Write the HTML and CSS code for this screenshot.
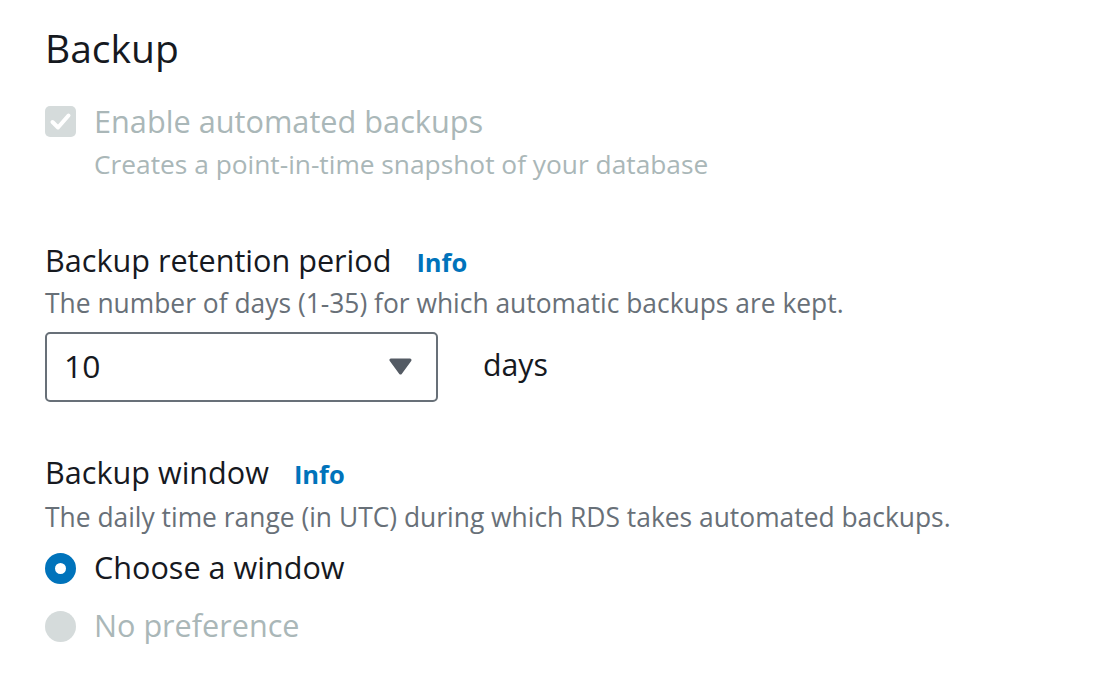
FILE: index.html
```html
<!DOCTYPE html>
<html lang="en">
<head>
<meta charset="utf-8">
<title>Backup</title>
<link rel="stylesheet" href="styles.css">
</head>
<body>
<section class="panel">
  <h2 class="panel-title">Backup</h2>

  <div class="check-row">
    <span class="checkbox" aria-hidden="true">
      <svg viewBox="0 0 31 31" width="31" height="31"><polyline points="7.5,16 13,21.5 23.5,9.5" fill="none" stroke="#fff" stroke-width="4" stroke-linecap="round" stroke-linejoin="round"/></svg>
    </span>
    <div class="check-text">
      <div class="check-label">Enable automated backups</div>
      <div class="check-desc">Creates a point-in-time snapshot of your database</div>
    </div>
  </div>

  <div class="field field-retention">
    <div class="field-label">Backup retention period <a class="info" href="#">Info</a></div>
    <div class="field-desc">The number of days (1-35) for which automatic backups are kept.</div>
    <div class="select-row">
      <div class="select">
        <span class="select-value">10</span>
        <svg class="select-arrow" viewBox="0 0 23 17" width="23" height="17"><polygon points="2,2 21,2 11.5,15" fill="#545b64" stroke="#545b64" stroke-width="3" stroke-linejoin="round"/></svg>
      </div>
      <span class="unit">days</span>
    </div>
  </div>

  <div class="field field-window">
    <div class="field-label">Backup window <a class="info" href="#">Info</a></div>
    <div class="field-desc field-desc-window">The daily time range (in UTC) during which RDS takes automated backups.</div>
    <div class="radio-row radio-first">
      <span class="radio radio-checked"></span>
      <span class="radio-label">Choose a window</span>
    </div>
    <div class="radio-row radio-second">
      <span class="radio radio-disabled"></span>
      <span class="radio-label radio-label-disabled">No preference</span>
    </div>
  </div>
</section>
</body>
</html>
```
FILE: styles.css
```css
html, body {
  margin: 0;
  padding: 0;
  background: #ffffff;
}

body {
  font-family: "Open Sans", "Noto Sans", sans-serif;
  color: #16191f;
}

.panel {
  padding: 25px 0 0 45px;
  width: 1000px;
}

.panel-title {
  margin: 0;
  font-size: 39px;
  line-height: 46px;
  font-weight: 400;
  color: #16191f;
}

/* checkbox */
.check-row {
  display: flex;
  align-items: flex-start;
  margin-top: 30px;
}

.checkbox {
  flex: none;
  width: 31px;
  height: 31px;
  margin-top: 5px;
  border-radius: 5px;
  background: #d5dbdb;
  display: flex;
}

.check-text {
  margin-left: 18px;
}

.check-label {
  font-size: 30.7px;
  line-height: 40px;
  color: #aab7b8;
}

.check-desc {
  font-size: 26.3px;
  line-height: 36px;
  margin-top: 5px;
  color: #aab7b8;
}

/* fields */
.field-retention {
  margin-top: 58px;
}

.field-window {
  margin-top: 50px;
}

.field-label {
  font-size: 30.6px;
  line-height: 40px;
  color: #16191f;
}

.info {
  font-size: 25.5px;
  font-weight: 700;
  color: #0073bb;
  text-decoration: none;
  margin-left: 17px;
}

.field-desc {
  font-size: 26.4px;
  line-height: 36px;
  color: #687078;
  margin-top: 3px;
}

.field-desc-window {
  margin-top: 5px;
}

/* select */
.select-row {
  display: flex;
  align-items: flex-start;
  margin-top: 11px;
}

.select {
  box-sizing: border-box;
  width: 393px;
  height: 70px;
  border: 2px solid #687078;
  border-radius: 5px;
  display: flex;
  align-items: flex-start;
  justify-content: space-between;
  padding: 0 24px 0 17px;
}

.select-value {
  font-size: 31.8px;
  line-height: 64px;
  color: #16191f;
}

.select-arrow {
  margin-top: 24px;
}

.unit {
  font-size: 30.3px;
  line-height: 40px;
  margin: 13px 0 0 45px;
  color: #16191f;
}

/* radios */
.radio-row {
  display: flex;
  align-items: flex-start;
}

.radio-first {
  margin-top: 12px;
}

.radio-second {
  margin-top: 18px;
}

.radio {
  flex: none;
  box-sizing: border-box;
  width: 31px;
  height: 31px;
  border-radius: 50%;
  margin-top: 6px;
}

.radio-checked {
  background: #ffffff;
  border: 10.5px solid #0073bb;
}

.radio-disabled {
  background: #d5dbdb;
}

.radio-label {
  margin-left: 18px;
  font-size: 30.6px;
  line-height: 40px;
  color: #16191f;
}

.radio-label-disabled {
  color: #aab7b8;
}
```
